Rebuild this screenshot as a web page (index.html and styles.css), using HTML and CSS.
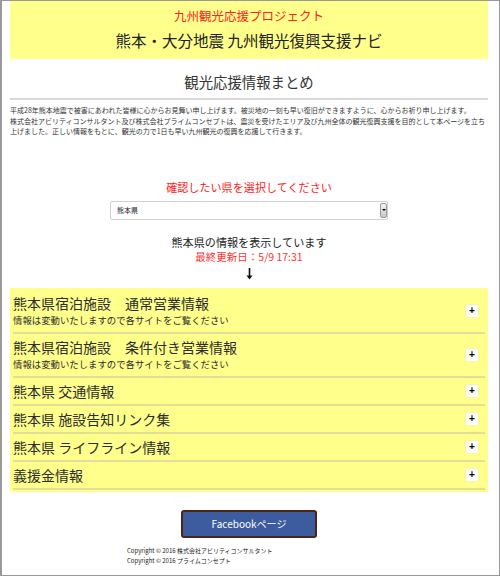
FILE: index.html
```html
<!DOCTYPE html>
<html lang="ja">
<head>
    <meta charset="UTF-8">
    <meta name="viewport" content="width=device-width, initial-scale=1.0">
    <title>熊本・大分地震 九州観光復興支援ナビ</title>
    <link rel="stylesheet" href="styles.css">
</head>
<body>
    <div class="frame">
        <header class="header">
            <p class="project">九州観光応援プロジェクト</p>
            <h1>熊本・大分地震 九州観光復興支援ナビ</h1>
        </header>

        <h2 class="summary">観光応援情報まとめ</h2>

        <p class="intro">
            平成28年熊本地震で被害にあわれた皆様に心からお見舞い申し上げます。被災地の一刻も早い復旧ができますように、心からお祈り申し上げます。<br>
            株式会社アビリティコンサルタント及び株式会社プライムコンセプトは、震災を受けたエリア及び九州全体の観光復興支援を目的として本ページを立ち上げました。正しい情報をもとに、観光の力で1日も早い九州観光の復興を応援して行きます。
        </p>

        <p class="choose">確認したい県を選択してください</p>
        <div class="select-wrap">
            <select id="pref">
                <option>熊本県</option>
                <option>大分県</option>
            </select>
            <span class="select-arrow"></span>
        </div>

        <p class="showing">熊本県の情報を表示しています</p>
        <p class="updated">最終更新日：5/9 17:31</p>
        <div class="down">
            <svg width="7" height="12" viewBox="0 0 7 12">
                <path d="M3.5 0 V10" stroke="#111" stroke-width="1.6"/>
                <path d="M0.5 7.5 L3.5 11.5 L6.5 7.5 Z" fill="#111"/>
            </svg>
        </div>

        <!-- アコーディオン -->
        <div class="accordion">
            <div class="item">
                <div>
                    <div class="item-title">熊本県宿泊施設　通常営業情報</div>
                    <div class="item-sub">情報は変動いたしますので各サイトをご覧ください</div>
                </div>
                <span class="plus">+</span>
            </div>
            <div class="item">
                <div>
                    <div class="item-title">熊本県宿泊施設　条件付き営業情報</div>
                    <div class="item-sub">情報は変動いたしますので各サイトをご覧ください</div>
                </div>
                <span class="plus">+</span>
            </div>
            <div class="item">
                <div class="item-title">熊本県 交通情報</div>
                <span class="plus">+</span>
            </div>
            <div class="item">
                <div class="item-title">熊本県 施設告知リンク集</div>
                <span class="plus">+</span>
            </div>
            <div class="item">
                <div class="item-title">熊本県 ライフライン情報</div>
                <span class="plus">+</span>
            </div>
            <div class="item">
                <div class="item-title">義援金情報</div>
                <span class="plus">+</span>
            </div>
        </div>

        <div class="fb-row">
            <a class="fb-button" href="#">Facebookページ</a>
        </div>

        <div class="copyright">
            <p>Copyright © 2016 株式会社アビリティコンサルタント</p>
            <p>Copyright © 2016 プライムコンセプト</p>
        </div>
    </div>
</body>
</html>
```

FILE: styles.css
```css
* {
    box-sizing: border-box;
}
body {
    margin: 0;
    font-family: "Noto Sans CJK JP", "Noto Sans", sans-serif;
    color: #333;
    background-color: #fff;
}
p {
    margin: 0;
}
.frame {
    height: 576px;
    border: 1px solid #999;
    border-left-width: 2px;
    padding: 0 11px 0 8px;
    overflow: hidden;
}
.header {
    background-color: #ffff8c;
    text-align: center;
    padding: 6px 0 7px;
}
.project {
    color: #f22;
    font-size: 12.5px;
    line-height: 18px;
}
h1 {
    margin: 3px 0 0;
    font-size: 15.5px;
    font-weight: normal;
    line-height: 24px;
    color: #222;
}
.summary {
    margin: 13px 0 0;
    padding-bottom: 6px;
    border-bottom: 2px solid #d8d8d8;
    text-align: center;
    font-size: 14.4px;
    font-weight: normal;
    line-height: 20px;
    color: #333;
}
.intro {
    margin-top: 5px;
    font-size: 7px;
    line-height: 10.5px;
    color: #333;
}
.choose {
    margin-top: 42px;
    text-align: center;
    color: #f22;
    font-size: 11.1px;
    line-height: 16px;
}
.select-wrap {
    position: relative;
    width: 278px;
    height: 19px;
    margin: 6px auto 0;
}
.select-wrap select {
    display: block;
    appearance: none;
    -webkit-appearance: none;
    width: 100%;
    height: 19px;
    padding: 0 0 0 6px;
    border: 1px solid #d0d0d0;
    border-radius: 2px;
    background-color: #fff;
    font-family: inherit;
    font-size: 7px;
    color: #222;
}
.select-arrow {
    position: absolute;
    right: 1px;
    top: 2px;
    width: 7px;
    height: 15px;
    border: 1px solid #999;
    border-radius: 2px;
    background: linear-gradient(#f4f4f4, #c8c8c8);
}
.select-arrow::after {
    content: "";
    position: absolute;
    left: 1px;
    top: 5px;
    border-left: 2px solid transparent;
    border-right: 2px solid transparent;
    border-top: 2px solid #000;
}
.showing {
    margin-top: 14px;
    text-align: center;
    font-size: 11.1px;
    line-height: 16px;
    color: #222;
}
.updated {
    text-align: center;
    color: #f33;
    font-size: 10.5px;
    line-height: 14px;
}
.down {
    display: flex;
    justify-content: center;
    margin-top: 4px;
    height: 12px;
}
.accordion {
    margin-top: 8px;
    padding: 2px 0;
    background-color: #ffff8c;
}
.item {
    display: flex;
    align-items: center;
    justify-content: space-between;
    margin: 0 3px;
    padding: 4px 6px 4px 0;
    border-bottom: 2px solid #e2de9a;
}
.item-title {
    font-size: 14px;
    line-height: 18px;
    color: #2b2b2b;
}
.item-sub {
    font-size: 9.4px;
    line-height: 16px;
    color: #2b2b2b;
}
.plus {
    width: 14px;
    height: 14px;
    background-color: #fff;
    border: 1px solid #fff4a0;
    font-family: "Liberation Sans", sans-serif;
    font-size: 10px;
    font-weight: bold;
    line-height: 12px;
    text-align: center;
    color: #000;
}
.fb-row {
    display: flex;
    justify-content: center;
    margin-top: 18px;
}
.fb-button {
    display: block;
    width: 136px;
    height: 28px;
    background-color: #3d5b9f;
    border: 2px solid #4a2516;
    border-radius: 3px;
    color: #fff;
    text-decoration: none;
    text-align: center;
    font-size: 10px;
    line-height: 24px;
}
.copyright {
    margin-top: 8px;
    padding-left: 117px;
    font-size: 6px;
    line-height: 10px;
    color: #222;
}
```
